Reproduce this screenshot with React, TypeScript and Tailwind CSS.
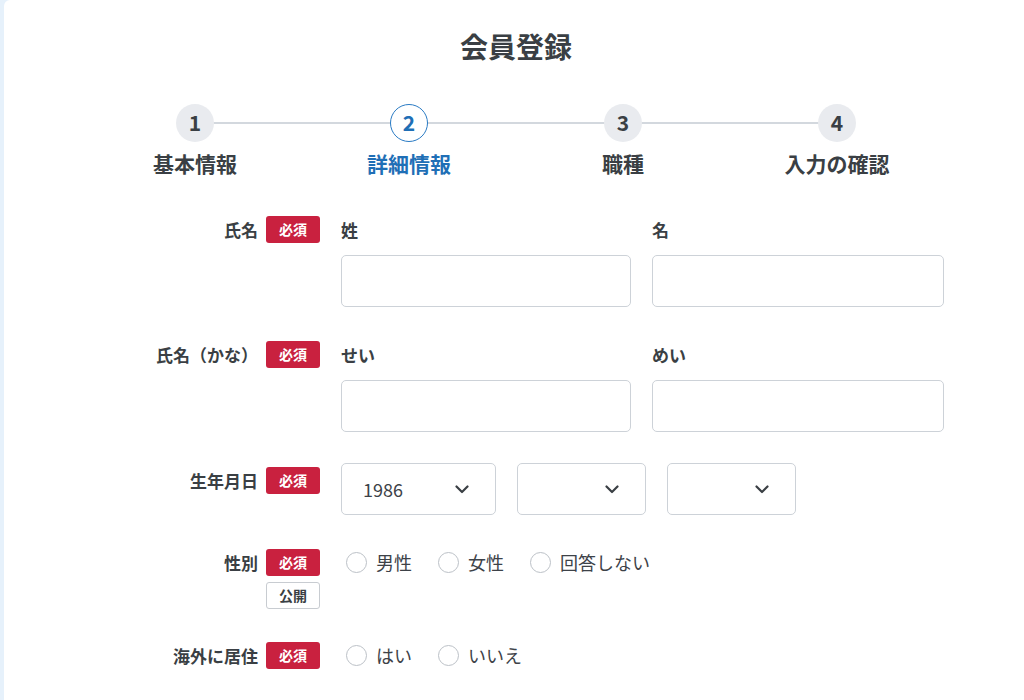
import React from 'react';

const FONT = { fontFamily: '"Noto Sans CJK JP", "Noto Sans", sans-serif' };

const steps = [
  { no: 1, label: '基本情報' },
  { no: 2, label: '詳細情報', active: true },
  { no: 3, label: '職種' },
  { no: 4, label: '入力の確認' },
];

function Required() {
  return (
    <span className="flex h-[27px] w-[54px] shrink-0 items-center justify-center rounded-[3px] bg-[#c9213f] text-[14px] font-bold text-white">
      必須
    </span>
  );
}

function Public() {
  return (
    <span className="mt-[6px] flex h-[27px] w-[54px] items-center justify-center rounded-[3px] border border-[#c8ccd1] bg-white text-[14px] font-bold text-[#3a3f44]">
      公開
    </span>
  );
}

function Chevron() {
  return (
    <svg width="14" height="9" viewBox="0 0 14 9" fill="none">
      <path d="M1.5 1.5 L7 7 L12.5 1.5" stroke="#3a3f44" strokeWidth="2.2" strokeLinecap="round" strokeLinejoin="round" />
    </svg>
  );
}

function Row({
  label,
  extra,
  offset = 0,
  children,
  className = '',
}: {
  label: string;
  extra?: React.ReactNode;
  offset?: number;
  children: React.ReactNode;
  className?: string;
}) {
  return (
    <div className={'flex ' + className}>
      <div className={'flex w-[232px] shrink-0 items-start justify-end gap-[8px] ' + (offset ? 'pt-[4px]' : '')}>
        <span className="h-[27px] text-[17px] font-bold leading-[27px] text-[#3a3f44]">{label}</span>
        <div className="flex flex-col">
          <Required />
          {extra}
        </div>
      </div>
      <div className="ml-[21px] w-[603px]">{children}</div>
    </div>
  );
}

function TextPair({ a, b }: { a: string; b: string }) {
  return (
    <div className="grid grid-cols-[290px_292px] gap-x-[21px]">
      {[a, b].map((t) => (
        <div key={t}>
          <div className="h-[27px] text-[17px] font-bold leading-[28px] text-[#3a3f44]">{t}</div>
          <input className="mt-[12px] h-[52px] w-full rounded-[5px] border border-[#cdd2d8] bg-white px-3 outline-none" />
        </div>
      ))}
    </div>
  );
}

function Select({ value, width }: { value?: string; width: string }) {
  return (
    <div className={'flex h-[52px] items-center justify-between rounded-[5px] border border-[#cdd2d8] bg-white pl-[21px] pr-[26px] ' + width}>
      <span className="text-[18px] text-[#3d4248]">{value}</span>
      <Chevron />
    </div>
  );
}

function Radios({ items }: { items: string[] }) {
  return (
    <div className="flex h-[27px] items-center gap-[26px] pl-[5px]">
      {items.map((t) => (
        <label key={t} className="flex items-center gap-[9px]">
          <span className="h-[21px] w-[21px] rounded-full border border-[#bcc1c7] bg-white" />
          <span className="text-[18px] text-[#3d4248]">{t}</span>
        </label>
      ))}
    </div>
  );
}

export default function App() {
  return (
    <div className="min-h-[700px] bg-[#e6f1fb] pl-[4px]" style={FONT}>
      <div className="min-h-[700px] rounded-tl-[6px] bg-white">
        <div className="ml-[84px] w-[856px] pb-10">
          <h1 className="pt-[26px] text-center text-[28px] font-bold leading-[40px] text-[#3a3f44]">会員登録</h1>

          <div className="relative mt-[38px] grid grid-cols-4">
            <div className="absolute left-[107px] right-[107px] top-[18px] h-[2px] bg-[#d3d8de]" />
            {steps.map((s) => (
              <div key={s.no} className="relative flex flex-col items-center">
                <div
                  className={
                    s.active
                      ? 'flex h-[38px] w-[38px] items-center justify-center rounded-full border-[1.5px] border-[#2a7bc4] bg-white text-[21px] font-bold text-[#1f6fb6]'
                      : 'flex h-[38px] w-[38px] items-center justify-center rounded-full bg-[#e9ebef] text-[21px] font-bold text-[#3a3f44]'
                  }
                >
                  {s.no}
                </div>
                <div
                  className={
                    'mt-[7px] text-[21px] font-bold leading-[28px] ' + (s.active ? 'text-[#1f6fb6]' : 'text-[#3a3f44]')
                  }
                >
                  {s.label}
                </div>
              </div>
            ))}
          </div>

          <form className="mt-[39px]">
            <Row label="氏名">
              <TextPair a="姓" b="名" />
            </Row>
            <Row label="氏名（かな）" className="mt-[34px]">
              <TextPair a="せい" b="めい" />
            </Row>
            <Row label="生年月日" offset={4} className="mt-[31px]">
              <div className="flex gap-[21px]">
                <Select value="1986" width="w-[155px]" />
                <Select width="w-[129px]" />
                <Select width="w-[129px]" />
              </div>
            </Row>
            <Row label="性別" extra={<Public />} className="mt-[34px]">
              <Radios items={['男性', '女性', '回答しない']} />
            </Row>
            <Row label="海外に居住" className="mt-[33px]">
              <Radios items={['はい', 'いいえ']} />
            </Row>
          </form>
        </div>
      </div>
    </div>
  );
}
